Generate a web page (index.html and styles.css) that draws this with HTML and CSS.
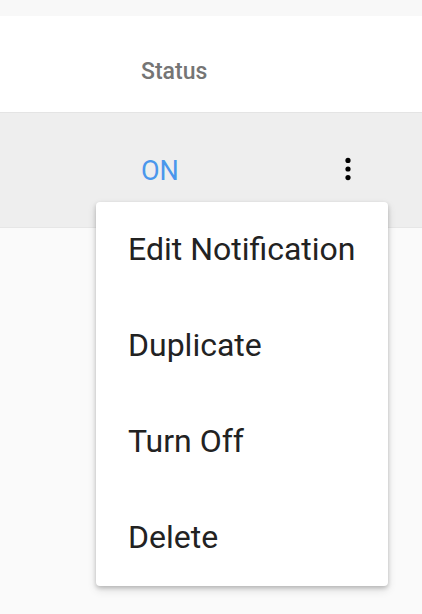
FILE: index.html
```html
<!DOCTYPE html>
<html lang="en">
<head>
    <meta charset="UTF-8" />
    <meta name="viewport" content="width=device-width, initial-scale=1.0" />
    <title>Notifications</title>
    <link rel="stylesheet" href="styles.css">
</head>
<body>
    <div class="top-strip"></div>

    <div class="table">
        <div class="table-head">
            <div class="cell cell-status">Status</div>
        </div>
        <div class="table-row active">
            <div class="cell cell-status on">ON</div>
            <div class="cell cell-actions">
                <button class="kebab" aria-label="More">
                    <svg width="24" height="24" viewBox="0 0 24 24">
                        <circle cx="12" cy="3.4" r="2.6" />
                        <circle cx="12" cy="12" r="2.6" />
                        <circle cx="12" cy="20.6" r="2.6" />
                    </svg>
                </button>
                <ul class="menu">
                    <li>Edit Notification</li>
                    <li>Duplicate</li>
                    <li>Turn Off</li>
                    <li>Delete</li>
                </ul>
            </div>
        </div>
    </div>
</body>
</html>
```

FILE: styles.css
```css
* { margin: 0; padding: 0; box-sizing: border-box; }
body {
    background: #fafafa;
    font-family: Roboto, 'Noto Sans', sans-serif;
    min-height: 100vh;
}
.top-strip {
    height: 16px;
    background: #f8f8f8;
}
.table-head {
    display: flex;
    align-items: center;
    height: 97px;
    background: #fff;
    border-bottom: 1px solid #e4e4e4;
    padding: 15px 0 0 141px;
}
.table-head .cell-status {
    font-size: 23px;
    color: #757575;
    font-weight: 500;
}
.table-row {
    display: flex;
    align-items: center;
    height: 115px;
    padding-left: 141px;
    background: #eeeeee;
    border-bottom: 1px solid #e6e6e6;
}
.cell-status {
    width: 195px;
}
.on {
    font-size: 27px;
    color: #4a97ec;
    padding-top: 2px;
}
.cell-actions {
    position: relative;
}
.kebab {
    background: none;
    border: none;
    width: 24px;
    height: 24px;
    display: block;
    margin-top: -2px;
}
.kebab svg { fill: #000; display: block; }
.menu {
    position: absolute;
    top: 43px;
    right: -28px;
    width: 292px;
    list-style: none;
    background: #fff;
    border-radius: 4px;
    box-shadow: 0 2px 4px rgba(0, 0, 0, 0.2), 0 4px 10px rgba(0, 0, 0, 0.12);
    z-index: 2;
}
.menu li {
    height: 96px;
    display: flex;
    align-items: center;
    padding: 0 0 2px 32px;
    font-size: 32px;
    color: #222;
}
```
